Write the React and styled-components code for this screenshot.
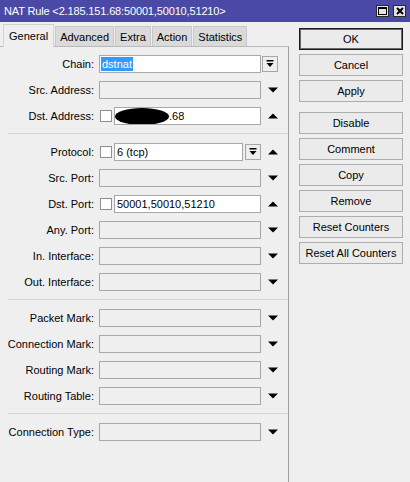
import React from 'react'
import styled, { createGlobalStyle } from 'styled-components'

const GlobalStyle = createGlobalStyle`
  html, body {
    margin: 0;
    padding: 0;
    background: #f0f0f0;
    font-family: "Liberation Sans", Arial, sans-serif;
    font-size: 11px;
    color: #000;
  }
  * { box-sizing: border-box; }
`

const Window = styled.div`
  width: 410px;
  height: 482px;
  display: flex;
  flex-direction: column;
  background: #f0eff0;
  overflow: hidden;
`

const TitleBar = styled.div`
  height: 22px;
  background: #4a4aa6;
  color: #fff;
  display: flex;
  align-items: center;
  padding: 0 4px 0 4px;
`

const Title = styled.span`
  flex: 1;
  letter-spacing: -0.15px;
  white-space: nowrap;
`

const TitleButtons = styled.div`
  display: flex;
  gap: 4px;
`

const TitleButton = styled.div`
  width: 13px;
  height: 12px;
  background: #e4e4e4;
  border: 1px solid #2a2a2a;
  display: flex;
  align-items: center;
  justify-content: center;
`

const Body = styled.div`
  flex: 1;
  display: flex;
`

const LeftColumn = styled.div`
  width: 289px;
  display: flex;
  flex-direction: column;
  padding-top: 2px;
`

const TabStrip = styled.div`
  display: flex;
  align-items: flex-end;
  height: 22px;
  padding-left: 3px;
  gap: 1px;
`

const Tab = styled.div`
  height: ${p => (p.$active ? '23px' : '20px')};
  padding: 0 ${p => (p.$active ? '5px' : '4px')};
  display: flex;
  align-items: center;
  background: ${p => (p.$active ? '#f0eff0' : '#dadada')};
  border: 1px solid ${p => (p.$active ? '#d2d2d2' : '#c8c8c8')};
  border-bottom: none;
  margin-bottom: ${p => (p.$active ? '-1px' : '0')};
  position: relative;
  z-index: ${p => (p.$active ? 1 : 0)};
  white-space: nowrap;
`

const Panel = styled.div`
  flex: 1;
  border-top: 1px solid #b9b9b9;
  border-right: 1px solid #a0a0a0;
  padding-top: 8px;
`

const Row = styled.div`
  display: flex;
  align-items: center;
  height: 18px;
  margin-bottom: 8px;
`

const Label = styled.div`
  width: 95px;
  padding-right: 1px;
  text-align: right;
  white-space: nowrap;
  margin-right: 4px;
`

const Controls = styled.div`
  width: 162px;
  height: 18px;
  display: flex;
  align-items: center;
`

const Field = styled.div`
  flex: 1;
  height: 18px;
  border: 1px solid #a7a7a7;
  background: ${p => (p.$filled ? '#fff' : 'transparent')};
  display: flex;
  align-items: center;
  padding-left: 2px;
  white-space: nowrap;
  overflow: hidden;
`

const Check = styled.div`
  width: 12px;
  height: 12px;
  border: 1px solid #8f8f8f;
  background: #fff;
  margin: 0 2px 0 1px;
  flex: none;
`

const DropButton = styled.div`
  width: 16px;
  height: 16px;
  border: 1px solid #a7a7a7;
  background: #eeeeee;
  display: flex;
  align-items: center;
  justify-content: center;
  flex: none;
  margin-left: ${p => p.$offset || 0}px;
`

const Trailing = styled.div`
  width: 26px;
  display: flex;
  align-items: center;
`

const Arrow = styled.svg`
  margin-left: 7px;
`

const Selected = styled.span`
  background: #3399ff;
  color: #fff;
  padding: 1px 1px;
  margin-left: -1px;
`

const Redacted = styled.span`
  display: inline-block;
  width: 54px;
  height: 17px;
  background: #000;
  border-radius: 50%;
  margin-left: -2px;
  flex: none;
`

const Separator = styled.div`
  height: 1px;
  background: #d6d6d6;
  margin: 0 0 9px 8px;
`

const RightColumn = styled.div`
  flex: 1;
  padding: 6px 0 0 10px;
  display: flex;
  flex-direction: column;
`

const Button = styled.div`
  width: 104px;
  height: 22px;
  display: flex;
  align-items: center;
  justify-content: center;
  background: #ebebeb;
  border: 1px solid ${p => (p.$primary ? '#1a1a1a' : '#adadad')};
  box-shadow: ${p => (p.$primary ? 'inset 0 0 0 1px #6a6a6a' : 'none')};
  margin-bottom: ${p => (p.$spaced ? '10px' : '4px')};
`

const BarDown = () => (
  <svg width="8" height="8" viewBox="0 0 8 8">
    <rect x="0.5" y="0" width="7" height="1.5" fill="#000" />
    <polygon points="0.5,3 7.5,3 4,7" fill="#000" />
  </svg>
)

const Down = () => (
  <Arrow width="10" height="6" viewBox="0 0 10 6">
    <polygon points="0,0.5 10,0.5 5,5.5" fill="#000" />
  </Arrow>
)

const Up = () => (
  <Arrow width="10" height="6" viewBox="0 0 10 6">
    <polygon points="0,5.5 10,5.5 5,0.5" fill="#000" />
  </Arrow>
)

const emptyRow = label => (
  <Row key={label}>
    <Label>{label}:</Label>
    <Controls>
      <Field />
    </Controls>
    <Trailing>
      <Down />
    </Trailing>
  </Row>
)

const tabs = ['General', 'Advanced', 'Extra', 'Action', 'Statistics']
const buttons = [
  'OK',
  'Cancel',
  'Apply',
  'Disable',
  'Comment',
  'Copy',
  'Remove',
  'Reset Counters',
  'Reset All Counters',
]

function App() {
  return (
    <>
      <GlobalStyle />
      <Window>
        <TitleBar>
          <Title>NAT Rule &lt;2.185.151.68:50001,50010,51210&gt;</Title>
          <TitleButtons>
            <TitleButton>
              <svg width="9" height="8" viewBox="0 0 9 8">
                <rect x="0.5" y="0.5" width="8" height="7" fill="none" stroke="#000" />
                <rect x="0" y="0" width="9" height="2" fill="#000" />
              </svg>
            </TitleButton>
            <TitleButton>
              <svg width="8" height="8" viewBox="0 0 8 8">
                <path d="M1 1 L7 7 M7 1 L1 7" stroke="#000" strokeWidth="2" />
              </svg>
            </TitleButton>
          </TitleButtons>
        </TitleBar>
        <Body>
          <LeftColumn>
            <TabStrip>
              {tabs.map((t, i) => (
                <Tab key={t} $active={i === 0}>{t}</Tab>
              ))}
            </TabStrip>
            <Panel>
              <Row>
                <Label>Chain:</Label>
                <Controls>
                  <Field $filled>
                    <Selected>dstnat</Selected>
                  </Field>
                </Controls>
                <Trailing>
                  <DropButton $offset={1}>
                    <BarDown />
                  </DropButton>
                </Trailing>
              </Row>
              {emptyRow('Src. Address')}
              <Row>
                <Label>Dst. Address:</Label>
                <Controls>
                  <Check />
                  <Field $filled>
                    <Redacted />
                    .68
                  </Field>
                </Controls>
                <Trailing>
                  <Up />
                </Trailing>
              </Row>
              <Separator />
              <Row>
                <Label>Protocol:</Label>
                <Controls>
                  <Check />
                  <Field $filled>6 (tcp)</Field>
                  <DropButton $offset={2}>
                    <BarDown />
                  </DropButton>
                </Controls>
                <Trailing>
                  <Up />
                </Trailing>
              </Row>
              {emptyRow('Src. Port')}
              <Row>
                <Label>Dst. Port:</Label>
                <Controls>
                  <Check />
                  <Field $filled>50001,50010,51210</Field>
                </Controls>
                <Trailing>
                  <Up />
                </Trailing>
              </Row>
              {emptyRow('Any. Port')}
              {emptyRow('In. Interface')}
              {emptyRow('Out. Interface')}
              <Separator />
              {emptyRow('Packet Mark')}
              {emptyRow('Connection Mark')}
              {emptyRow('Routing Mark')}
              {emptyRow('Routing Table')}
              <Separator />
              {emptyRow('Connection Type')}
            </Panel>
          </LeftColumn>
          <RightColumn>
            {buttons.map((b, i) => (
              <Button key={b} $primary={i === 0} $spaced={b === 'Apply'}>
                {b}
              </Button>
            ))}
          </RightColumn>
        </Body>
      </Window>
    </>
  )
}

export default App
